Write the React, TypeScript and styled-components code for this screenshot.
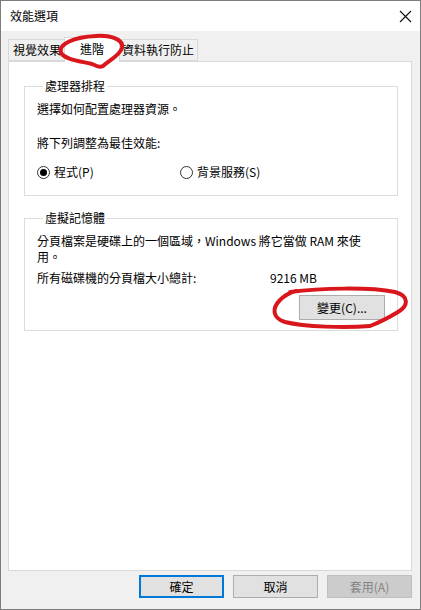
import React from "react";
import styled, { createGlobalStyle } from "styled-components";

const Global = createGlobalStyle`
  html, body { margin: 0; padding: 0; background: #fff; }
  body { font-family: "Noto Sans CJK TC", "Noto Sans", "Liberation Sans", sans-serif; font-size: 12px; color: #000; }
  * { box-sizing: border-box; }
`;

const Window = styled.div`
  position: relative;
  width: 421px;
  height: 610px;
  border: 1px solid #7d7d7d;
  background: #f0f0f0;
  display: flex;
  flex-direction: column;
  overflow: hidden;
`;

const TitleBar = styled.div`
  height: 30px;
  flex: none;
  background: #fff;
  display: flex;
  align-items: center;
  justify-content: space-between;
  padding: 0 8px 0 9px;
`;

const Title = styled.span`
  font-size: 12px;
  line-height: 16px;
`;

const CloseBtn = styled.div`
  width: 14px;
  height: 14px;
  display: flex;
  align-items: center;
  justify-content: center;
`;

const Body = styled.div`
  flex: 1;
  display: flex;
  flex-direction: column;
  padding: 6px 8px 0 7px;
`;

const TabStrip = styled.div`
  display: flex;
  align-items: flex-end;
  height: 25px;
  margin-bottom: -1px;
  position: relative;
  z-index: 1;
`;

const Tab = styled.div<{ $active?: boolean; $pad: number }>`
  height: ${(p) => (p.$active ? 25 : 22)}px;
  margin: ${(p) => (p.$active ? "0 -2px" : "0 0 1px 0")};
  padding: 0 ${(p) => p.$pad}px;
  padding-bottom: ${(p) => (p.$active ? 3 : 0)}px;
  border: 1px solid #d9d9d9;
  border-bottom: ${(p) => (p.$active ? "none" : "1px solid #d9d9d9")};
  background: ${(p) => (p.$active ? "#fff" : "#f0f0f0")};
  display: flex;
  align-items: center;
  font-size: 12px;
  line-height: 16px;
  position: relative;
  z-index: ${(p) => (p.$active ? 2 : 0)};
  white-space: nowrap;
`;

const Panel = styled.div`
  height: 510px;
  flex: none;
  background: #fff;
  border: 1px solid #d9d9d9;
  padding: 16px 13px 0 15px;
  display: flex;
  flex-direction: column;
`;

const Group = styled.fieldset<{ $gap?: number }>`
  margin: ${(p) => p.$gap ?? 0}px 0 0 0;
  border: 1px solid #dcdcdc;
  padding: 0 12px;
  min-width: 0;
`;

const Legend = styled.legend`
  font-size: 12px;
  line-height: 16px;
  padding: 0 2px;
  margin-left: 6px;
`;

const Text = styled.div<{ $mt?: number }>`
  font-size: 12px;
  line-height: 16px;
  margin-top: ${(p) => p.$mt ?? 0}px;
`;

const RadioRow = styled.div`
  display: grid;
  grid-template-columns: 143px auto;
  margin-top: 13px;
  margin-bottom: 15px;
`;

const RadioItem = styled.label`
  display: flex;
  align-items: center;
  gap: 4px;
  line-height: 16px;
`;

const RadioCircle = styled.span<{ $checked?: boolean }>`
  width: 13px;
  height: 13px;
  border-radius: 50%;
  border: 1px solid #333;
  background: #fff;
  display: flex;
  align-items: center;
  justify-content: center;
  &::after {
    content: "";
    width: 7px;
    height: 7px;
    border-radius: 50%;
    background: ${(p) => (p.$checked ? "#000" : "transparent")};
  }
`;

const TotalRow = styled.div`
  display: grid;
  grid-template-columns: 233px auto;
  line-height: 16px;
  margin-top: 5px;
`;

const ButtonRow = styled.div<{ $mt?: number; $mb?: number }>`
  display: flex;
  justify-content: flex-end;
  gap: 9px;
  margin-top: ${(p) => p.$mt ?? 0}px;
  margin-bottom: ${(p) => p.$mb ?? 0}px;
`;

const Button = styled.div<{ $variant?: "default" | "normal" | "disabled"; $w: number; $h: number }>`
  width: ${(p) => p.$w}px;
  height: ${(p) => p.$h}px;
  display: flex;
  align-items: center;
  justify-content: center;
  font-size: 12px;
  background: ${(p) => (p.$variant === "disabled" ? "#cccccc" : "#e1e1e1")};
  color: ${(p) => (p.$variant === "disabled" ? "#838383" : "#000")};
  border: ${(p) =>
    p.$variant === "default" ? "2px solid #0078d7" : p.$variant === "disabled" ? "1px solid #bfbfbf" : "1px solid #adadad"};
`;

const Footer = styled.div`
  padding-top: 4px;
`;

const Marks = styled.svg`
  position: absolute;
  left: -1px;
  top: -1px;
  pointer-events: none;
  z-index: 5;
`;

export default function App() {
  return (
    <>
      <Global />
      <Window>
        <TitleBar>
          <Title>效能選項</Title>
          <CloseBtn>
            <svg width="13" height="13" viewBox="0 0 13 13">
              <path d="M1 1 L12 12 M12 1 L1 12" stroke="#111" strokeWidth="1.1" fill="none" />
            </svg>
          </CloseBtn>
        </TitleBar>
        <Body>
          <TabStrip>
            <Tab $pad={4}>視覺效果</Tab>
            <Tab $active $pad={15}>進階</Tab>
            <Tab $pad={3}>資料執行防止</Tab>
          </TabStrip>
          <Panel>
            <Group>
              <Legend>處理器排程</Legend>
              <Text $mt={7}>選擇如何配置處理器資源。</Text>
              <Text $mt={18}>將下列調整為最佳效能:</Text>
              <RadioRow>
                <RadioItem>
                  <RadioCircle $checked />
                  程式(P)
                </RadioItem>
                <RadioItem>
                  <RadioCircle />
                  背景服務(S)
                </RadioItem>
              </RadioRow>
            </Group>
            <Group $gap={14}>
              <Legend>虛擬記憶體</Legend>
              <Text $mt={7}>分頁檔案是硬碟上的一個區域，Windows 將它當做 RAM 來使</Text>
              <Text>用。</Text>
              <TotalRow>
                <span>所有磁碟機的分頁檔大小總計:</span>
                <span>9216 MB</span>
              </TotalRow>
              <ButtonRow $mt={9} $mb={10}>
                <Button $variant="normal" $w={86} $h={25}>變更(C)...</Button>
              </ButtonRow>
            </Group>
          </Panel>
          <Footer>
            <ButtonRow>
              <Button $variant="default" $w={85} $h={23}>確定</Button>
              <Button $variant="normal" $w={85} $h={23}>取消</Button>
              <Button $variant="disabled" $w={85} $h={23}>套用(A)</Button>
            </ButtonRow>
          </Footer>
        </Body>
        <Marks width="421" height="610" viewBox="0 0 421 610">
          <path
            d="M61 53 C58 44 74 37 96 36 C112 35 124 40 122 48 C120 55 110 60 103 66 C99 68 97 66 92 64 C80 61 66 60 61 53"
            stroke="#d9161c"
            strokeWidth="4"
            fill="none"
            strokeLinecap="round"
          />
          <path
            d="M290 292 C320 288 370 287 395 292 C410 296 408 306 398 312 C388 318 378 323 370 326 C345 328 305 327 285 322 C272 318 272 308 280 300 C284 296 288 293 296 291"
            stroke="#d9161c"
            strokeWidth="4"
            fill="none"
            strokeLinecap="round"
          />
        </Marks>
      </Window>
    </>
  );
}
